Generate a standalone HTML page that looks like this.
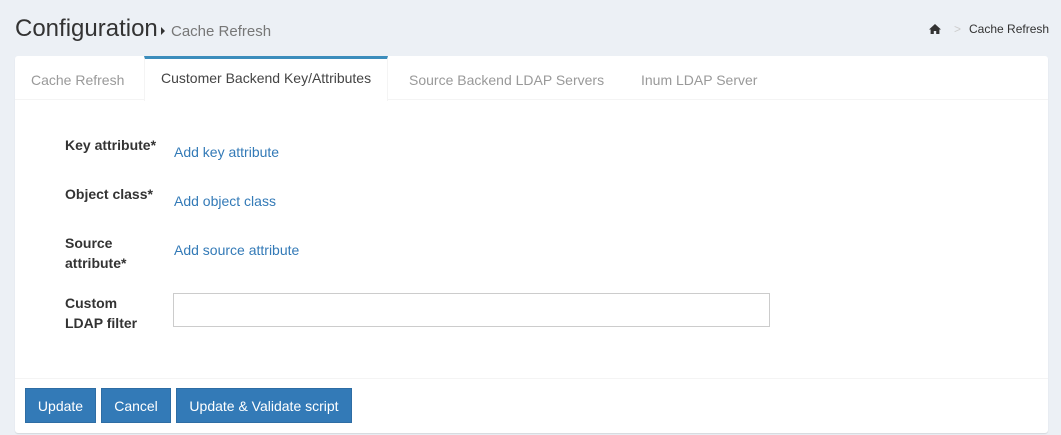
<!DOCTYPE html>
<html><head><style>
*{box-sizing:border-box}
body{margin:0;background:#ecf0f5;font-family:"Liberation Sans",sans-serif;width:1061px;height:435px;position:relative;overflow:hidden;font-size:14px;color:#333}
.a{position:absolute}
.lbl{position:absolute;left:65px;font-weight:bold;font-size:14px;line-height:20px;color:#333}
.lnk{position:absolute;left:174px;color:#337ab7;font-size:14px}
.btn{position:absolute;top:388px;height:35px;background:#337ab7;border:1px solid #2e6da4;color:#fff;font-size:14px;line-height:35px;text-align:center}
.tab{position:absolute;top:72px;font-size:14px;color:#999}
</style></head><body>
<div class="a" style="left:15px;top:15px;font-size:24px;color:#333">Configuration</div>
<div class="a" style="left:161px;top:27px;width:0;height:0;border-left:4px solid #333;border-top:4px solid transparent;border-bottom:4px solid transparent"></div>
<div class="a" style="left:171px;top:23px;font-size:15px;color:#777">Cache Refresh</div>
<svg class="a" style="left:929px;top:24px" width="12" height="10" viewBox="0 0 12 10"><path d="M6 0L0 5.5h1.6V10h3.2V7h2.4v3h3.2V5.5H12z" fill="#333"/></svg>
<div class="a" style="left:954px;top:22px;font-size:12px;color:#ccc">&gt;</div>
<div class="a" style="left:969px;top:22px;font-size:12px;color:#333">Cache Refresh</div>
<div class="a" style="left:15px;top:56px;width:1033px;height:377px;background:#fff;border-radius:3px;box-shadow:0 1px 1px rgba(0,0,0,.1)"></div>
<div class="a" style="left:15px;top:99px;width:1033px;height:1px;background:#f4f4f4"></div>
<div class="a" style="left:144px;top:56px;width:244px;height:45px;background:#fff;border-top:3px solid #3c8dbc;border-left:1px solid #f4f4f4;border-right:1px solid #f4f4f4"></div>
<div class="tab" style="left:31px">Cache Refresh</div>
<div class="tab" style="left:161px;top:70px;color:#444">Customer Backend Key/Attributes</div>
<div class="tab" style="left:409px">Source Backend LDAP Servers</div>
<div class="tab" style="left:641px">Inum LDAP Server</div>
<div class="lbl" style="top:135px">Key attribute*</div>
<div class="lnk" style="top:144px">Add key attribute</div>
<div class="lbl" style="top:184px">Object class*</div>
<div class="lnk" style="top:193px">Add object class</div>
<div class="lbl" style="top:233px">Source<br>attribute*</div>
<div class="lnk" style="top:242px">Add source attribute</div>
<div class="lbl" style="top:293px">Custom<br>LDAP filter</div>
<div class="a" style="left:173px;top:293px;width:597px;height:34px;border:1px solid #ccc"></div>
<div class="a" style="left:15px;top:378px;width:1033px;height:1px;background:#f4f4f4"></div>
<div class="btn" style="left:25px;width:71px">Update</div>
<div class="btn" style="left:101px;width:70px">Cancel</div>
<div class="btn" style="left:176px;width:176px">Update &amp; Validate script</div>
</body></html>
